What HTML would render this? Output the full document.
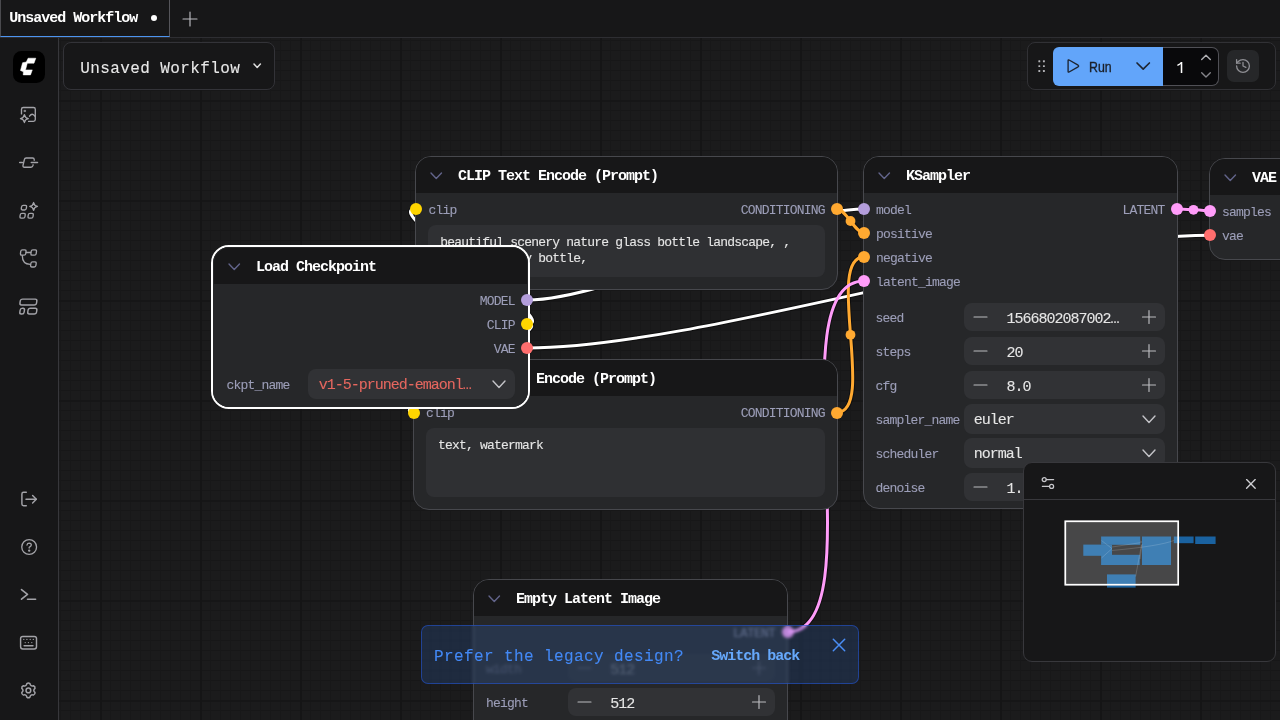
<!DOCTYPE html>
<html><head><meta charset="utf-8"><title>ComfyUI</title>
<style>
html,body{margin:0;padding:0}
body{width:1280px;height:720px;overflow:hidden;position:relative;background:#1c1c1d;font-family:"Liberation Mono",monospace}
.b{position:absolute;box-sizing:border-box;display:block}
.t{position:absolute;white-space:pre;line-height:20px;font-family:"Liberation Mono",monospace}
.s{font-family:"Liberation Sans",sans-serif}
#grid{position:absolute;left:0;top:0;width:1280px;height:720px;background-color:#1b1b1c;
background-image:linear-gradient(to right,#151516 2px,transparent 2px),linear-gradient(to bottom,#161617 2px,transparent 2px),linear-gradient(to right,#181819 1px,transparent 1px),linear-gradient(to bottom,#171718 1px,transparent 1px);
background-size:100px 100px,100px 100px,10px 10px,10px 10px}
.node{position:absolute;box-sizing:border-box;border:1px solid #47484d;border-radius:16px;background:#262729;overflow:hidden}
.node>.h{position:absolute;left:0;top:0;right:0;background:#171718}
.w{position:absolute;box-sizing:border-box;background:#313235;border-radius:8px}
</style></head><body>
<div id="grid"></div>

<div id="cv" style="position:absolute;left:0;top:0;width:1280px;height:720px;will-change:transform">
<svg class="b" style="left:0px;top:0px;" width="1280" height="720" viewBox="0 0 1280 720" fill="none"><path d="M527.0 300.0 C614.3 300.0 776.7 209.0 864.0 209.0" stroke="rgba(0,0,0,0.45)" stroke-width="5"/><path d="M527.0 324.0 C567.0 324.0 376.0 209.0 416.0 209.0" stroke="rgba(0,0,0,0.45)" stroke-width="5"/><path d="M527.0 324.0 C562.9 324.0 378.1 412.5 414.0 412.5" stroke="rgba(0,0,0,0.45)" stroke-width="5"/><path d="M527.0 348.0 C700.1 348.0 1036.9 235.2 1210.0 235.2" stroke="rgba(0,0,0,0.45)" stroke-width="5"/><path d="M837.0 209.0 C846.0 209.0 855.0 233.0 864.0 233.0" stroke="rgba(0,0,0,0.45)" stroke-width="5"/><path d="M837.0 412.5 C876.5 412.5 824.5 257.0 864.0 257.0" stroke="rgba(0,0,0,0.45)" stroke-width="5"/><path d="M787.5 632.0 C877.3 632.0 774.2 281.0 864.0 281.0" stroke="rgba(0,0,0,0.45)" stroke-width="5"/><path d="M1177.0 209.0 C1185.3 209.0 1201.7 210.7 1210.0 210.7" stroke="rgba(0,0,0,0.45)" stroke-width="5"/><path d="M527.0 300.0 C614.3 300.0 776.7 209.0 864.0 209.0" stroke="#fff" stroke-width="3"/><circle cx="695.5" cy="254.5" r="4.9" fill="#fff"/><path d="M527.0 324.0 C567.0 324.0 376.0 209.0 416.0 209.0" stroke="#fff" stroke-width="3"/><circle cx="471.5" cy="266.5" r="4.9" fill="#fff"/><path d="M527.0 324.0 C562.9 324.0 378.1 412.5 414.0 412.5" stroke="#fff" stroke-width="3"/><circle cx="470.5" cy="368.2" r="4.9" fill="#fff"/><path d="M527.0 348.0 C700.1 348.0 1036.9 235.2 1210.0 235.2" stroke="#fff" stroke-width="3"/><circle cx="868.5" cy="291.6" r="4.9" fill="#fff"/><path d="M837.0 209.0 C846.0 209.0 855.0 233.0 864.0 233.0" stroke="#ffa931" stroke-width="3"/><circle cx="850.5" cy="221.0" r="4.9" fill="#ffa931"/><path d="M837.0 412.5 C876.5 412.5 824.5 257.0 864.0 257.0" stroke="#ffa931" stroke-width="3"/><circle cx="850.5" cy="334.8" r="4.9" fill="#ffa931"/><path d="M787.5 632.0 C877.3 632.0 774.2 281.0 864.0 281.0" stroke="#ff9cf9" stroke-width="3"/><circle cx="825.8" cy="456.5" r="4.9" fill="#ff9cf9"/><path d="M1177.0 209.0 C1185.3 209.0 1201.7 210.7 1210.0 210.7" stroke="#ff9cf9" stroke-width="3"/><circle cx="1193.5" cy="209.8" r="4.9" fill="#ff9cf9"/></svg>
<div class="node" style="left:415px;top:156px;width:423px;height:134px;"><div class="h" style="height:36px"></div></div>
<svg class="b" style="left:428.75px;top:170.89999999999998px;" width="14.5" height="9.6" viewBox="0 0 14.5 9.6" fill="none"><path d="M2 2 L7.25 7.6 L12.5 2" stroke="#62648a" stroke-width="1.4" stroke-linecap="round" stroke-linejoin="round"/></svg>
<div class="t" style="left:458.00px;top:167.41px;font-size:15px;letter-spacing:-1.002px;color:#fff;font-weight:700;">CLIP Text Encode (Prompt)</div>
<div class="w" style="left:428px;top:225px;width:397px;height:52px;background:#2f3033"></div>
<div class="t" style="left:440.30px;top:232.94px;font-size:13px;letter-spacing:-0.801px;color:#e6e6e6;-webkit-text-stroke:0.1px;">beautiful scenery nature glass bottle landscape, ,</div>
<div class="t" style="left:440.30px;top:248.74px;font-size:13px;letter-spacing:-0.801px;color:#e6e6e6;-webkit-text-stroke:0.1px;">purple galaxy bottle,</div>
<div class="t" style="left:428.50px;top:200.89px;font-size:13px;letter-spacing:-0.801px;color:#9c9eb8;-webkit-text-stroke:0.1px;">clip</div>
<div class="t" style="left:740.80px;top:200.89px;font-size:13px;letter-spacing:-0.801px;color:#9c9eb8;-webkit-text-stroke:0.1px;">CONDITIONING</div>
<div class="b" style="left:410.0px;top:203.0px;width:12px;height:12px;border-radius:50%;background:#ffd500"></div>
<div class="b" style="left:831.0px;top:203.0px;width:12px;height:12px;border-radius:50%;background:#ffa931"></div>
<div class="node" style="left:413px;top:358.5px;width:424.5px;height:151px;"><div class="h" style="height:36px"></div></div>
<svg class="b" style="left:426.75px;top:373.4px;" width="14.5" height="9.6" viewBox="0 0 14.5 9.6" fill="none"><path d="M2 2 L7.25 7.6 L12.5 2" stroke="#62648a" stroke-width="1.4" stroke-linecap="round" stroke-linejoin="round"/></svg>
<div class="t" style="left:456.00px;top:369.91px;font-size:15px;letter-spacing:-1.002px;color:#fff;font-weight:700;">CLIP Text Encode (Prompt)</div>
<div class="w" style="left:426px;top:428px;width:399px;height:69px;background:#2f3033"></div>
<div class="t" style="left:438.10px;top:435.64px;font-size:13px;letter-spacing:-0.801px;color:#e6e6e6;-webkit-text-stroke:0.1px;">text, watermark</div>
<div class="t" style="left:425.90px;top:403.54px;font-size:13px;letter-spacing:-0.801px;color:#9c9eb8;-webkit-text-stroke:0.1px;">clip</div>
<div class="t" style="left:740.80px;top:403.54px;font-size:13px;letter-spacing:-0.801px;color:#9c9eb8;-webkit-text-stroke:0.1px;">CONDITIONING</div>
<div class="b" style="left:407.5px;top:406.5px;width:12px;height:12px;border-radius:50%;background:#ffd500"></div>
<div class="b" style="left:831.0px;top:406.5px;width:12px;height:12px;border-radius:50%;background:#ffa931"></div>
<div class="node" style="left:863px;top:156px;width:315px;height:353px;"><div class="h" style="height:36px"></div></div>
<svg class="b" style="left:876.75px;top:170.89999999999998px;" width="14.5" height="9.6" viewBox="0 0 14.5 9.6" fill="none"><path d="M2 2 L7.25 7.6 L12.5 2" stroke="#62648a" stroke-width="1.4" stroke-linecap="round" stroke-linejoin="round"/></svg>
<div class="t" style="left:906.00px;top:167.41px;font-size:15px;letter-spacing:-1.002px;color:#fff;font-weight:700;">KSampler</div>
<div class="t" style="left:875.90px;top:201.14px;font-size:13px;letter-spacing:-0.801px;color:#9c9eb8;-webkit-text-stroke:0.1px;">model</div>
<div class="b" style="left:858.0px;top:203.0px;width:12px;height:12px;border-radius:50%;background:#b39ddb"></div>
<div class="t" style="left:875.90px;top:225.14px;font-size:13px;letter-spacing:-0.801px;color:#9c9eb8;-webkit-text-stroke:0.1px;">positive</div>
<div class="b" style="left:858.0px;top:227.0px;width:12px;height:12px;border-radius:50%;background:#ffa931"></div>
<div class="t" style="left:875.90px;top:249.14px;font-size:13px;letter-spacing:-0.801px;color:#9c9eb8;-webkit-text-stroke:0.1px;">negative</div>
<div class="b" style="left:858.0px;top:251.0px;width:12px;height:12px;border-radius:50%;background:#ffa931"></div>
<div class="t" style="left:875.90px;top:273.14px;font-size:13px;letter-spacing:-0.801px;color:#9c9eb8;-webkit-text-stroke:0.1px;">latent_image</div>
<div class="b" style="left:858.0px;top:275.0px;width:12px;height:12px;border-radius:50%;background:#ff9cf9"></div>
<div class="t" style="left:1122.50px;top:201.14px;font-size:13px;letter-spacing:-0.801px;color:#9c9eb8;-webkit-text-stroke:0.1px;">LATENT</div>
<div class="b" style="left:1171.0px;top:203.0px;width:12px;height:12px;border-radius:50%;background:#ff9cf9"></div>
<div class="t" style="left:875.60px;top:309.04px;font-size:13px;letter-spacing:-0.801px;color:#9c9eb8;-webkit-text-stroke:0.1px;">seed</div>
<div class="w" style="left:964px;top:303px;width:201px;height:28px"></div>
<svg class="b" style="left:973px;top:313.0px;" width="15" height="8" viewBox="0 0 15 8" fill="none"><path d="M1 4H14" stroke="#bcbcc0" stroke-width="1.15" stroke-linecap="round"/></svg>
<svg class="b" style="left:1141px;top:309.0px;" width="16" height="16" viewBox="0 0 16 16" fill="none"><path d="M1.5 8H14.5M8 1.5V14.5" stroke="#bcbcc0" stroke-width="1.15" stroke-linecap="round"/></svg>
<div class="t" style="left:1006.60px;top:310.11px;font-size:15px;letter-spacing:-1.002px;color:#e6e6e6;-webkit-text-stroke:0.1px;">1566802087002…</div>
<div class="t" style="left:875.60px;top:343.04px;font-size:13px;letter-spacing:-0.801px;color:#9c9eb8;-webkit-text-stroke:0.1px;">steps</div>
<div class="w" style="left:964px;top:337px;width:201px;height:28px"></div>
<svg class="b" style="left:973px;top:347.0px;" width="15" height="8" viewBox="0 0 15 8" fill="none"><path d="M1 4H14" stroke="#bcbcc0" stroke-width="1.15" stroke-linecap="round"/></svg>
<svg class="b" style="left:1141px;top:343.0px;" width="16" height="16" viewBox="0 0 16 16" fill="none"><path d="M1.5 8H14.5M8 1.5V14.5" stroke="#bcbcc0" stroke-width="1.15" stroke-linecap="round"/></svg>
<div class="t" style="left:1006.60px;top:344.11px;font-size:15px;letter-spacing:-1.002px;color:#e6e6e6;-webkit-text-stroke:0.1px;">20</div>
<div class="t" style="left:875.60px;top:377.04px;font-size:13px;letter-spacing:-0.801px;color:#9c9eb8;-webkit-text-stroke:0.1px;">cfg</div>
<div class="w" style="left:964px;top:371px;width:201px;height:28px"></div>
<svg class="b" style="left:973px;top:381.0px;" width="15" height="8" viewBox="0 0 15 8" fill="none"><path d="M1 4H14" stroke="#bcbcc0" stroke-width="1.15" stroke-linecap="round"/></svg>
<svg class="b" style="left:1141px;top:377.0px;" width="16" height="16" viewBox="0 0 16 16" fill="none"><path d="M1.5 8H14.5M8 1.5V14.5" stroke="#bcbcc0" stroke-width="1.15" stroke-linecap="round"/></svg>
<div class="t" style="left:1006.60px;top:378.11px;font-size:15px;letter-spacing:-1.002px;color:#e6e6e6;-webkit-text-stroke:0.1px;">8.0</div>
<div class="t" style="left:875.60px;top:411.04px;font-size:13px;letter-spacing:-0.801px;color:#9c9eb8;-webkit-text-stroke:0.1px;">sampler_name</div>
<div class="w" style="left:964px;top:404px;width:201px;height:30px"></div>
<svg class="b" style="left:1141.0px;top:414.05px;" width="16" height="10.5" viewBox="0 0 16 10.5" fill="none"><path d="M2 2 L8.0 8.5 L14 2" stroke="#c4c4c8" stroke-width="1.4" stroke-linecap="round" stroke-linejoin="round"/></svg>
<div class="t" style="left:973.80px;top:411.21px;font-size:15px;letter-spacing:-1.002px;color:#e6e6e6;-webkit-text-stroke:0.1px;">euler</div>
<div class="t" style="left:875.60px;top:445.04px;font-size:13px;letter-spacing:-0.801px;color:#9c9eb8;-webkit-text-stroke:0.1px;">scheduler</div>
<div class="w" style="left:964px;top:438px;width:201px;height:30px"></div>
<svg class="b" style="left:1141.0px;top:448.05px;" width="16" height="10.5" viewBox="0 0 16 10.5" fill="none"><path d="M2 2 L8.0 8.5 L14 2" stroke="#c4c4c8" stroke-width="1.4" stroke-linecap="round" stroke-linejoin="round"/></svg>
<div class="t" style="left:973.80px;top:445.21px;font-size:15px;letter-spacing:-1.002px;color:#e6e6e6;-webkit-text-stroke:0.1px;">normal</div>
<div class="t" style="left:875.60px;top:479.04px;font-size:13px;letter-spacing:-0.801px;color:#9c9eb8;-webkit-text-stroke:0.1px;">denoise</div>
<div class="w" style="left:964px;top:473px;width:201px;height:28px"></div>
<svg class="b" style="left:973px;top:483.0px;" width="15" height="8" viewBox="0 0 15 8" fill="none"><path d="M1 4H14" stroke="#bcbcc0" stroke-width="1.15" stroke-linecap="round"/></svg>
<svg class="b" style="left:1141px;top:479.0px;" width="16" height="16" viewBox="0 0 16 16" fill="none"><path d="M1.5 8H14.5M8 1.5V14.5" stroke="#bcbcc0" stroke-width="1.15" stroke-linecap="round"/></svg>
<div class="t" style="left:1006.60px;top:480.11px;font-size:15px;letter-spacing:-1.002px;color:#e6e6e6;-webkit-text-stroke:0.1px;">1.00</div>
<div class="node" style="left:1209px;top:158px;width:200px;height:101.5px;"><div class="h" style="height:36px"></div></div>
<svg class="b" style="left:1222.75px;top:172.89999999999998px;" width="14.5" height="9.6" viewBox="0 0 14.5 9.6" fill="none"><path d="M2 2 L7.25 7.6 L12.5 2" stroke="#62648a" stroke-width="1.4" stroke-linecap="round" stroke-linejoin="round"/></svg>
<div class="t" style="left:1252.00px;top:169.41px;font-size:15px;letter-spacing:-1.002px;color:#fff;font-weight:700;">VAE Decode</div>
<div class="t" style="left:1221.90px;top:202.74px;font-size:13px;letter-spacing:-0.801px;color:#9c9eb8;-webkit-text-stroke:0.1px;">samples</div>
<div class="t" style="left:1221.90px;top:227.24px;font-size:13px;letter-spacing:-0.801px;color:#9c9eb8;-webkit-text-stroke:0.1px;">vae</div>
<div class="b" style="left:1204.0px;top:204.7px;width:12px;height:12px;border-radius:50%;background:#ff9cf9"></div>
<div class="b" style="left:1204.0px;top:229.2px;width:12px;height:12px;border-radius:50%;background:#ff6e6e"></div>
<div class="node" style="left:473px;top:579px;width:315px;height:200px;"><div class="h" style="height:36px"></div></div>
<svg class="b" style="left:486.75px;top:593.9000000000001px;" width="14.5" height="9.6" viewBox="0 0 14.5 9.6" fill="none"><path d="M2 2 L7.25 7.6 L12.5 2" stroke="#62648a" stroke-width="1.4" stroke-linecap="round" stroke-linejoin="round"/></svg>
<div class="t" style="left:516.00px;top:590.41px;font-size:15px;letter-spacing:-1.002px;color:#fff;font-weight:700;">Empty Latent Image</div>
<div style="opacity:.55">
<div class="t" style="left:733.00px;top:624.04px;font-size:13px;letter-spacing:-0.801px;color:#9c9eb8;-webkit-text-stroke:0.1px;">LATENT</div>
</div>
<div style="opacity:.27">
<div class="t" style="left:485.90px;top:660.24px;font-size:13px;letter-spacing:-0.801px;color:#9c9eb8;-webkit-text-stroke:0.1px;">width</div>
<div class="w" style="left:568.3px;top:654px;width:206.5px;height:28px"></div>
<svg class="b" style="left:577.3px;top:664.0px;" width="15" height="8" viewBox="0 0 15 8" fill="none"><path d="M1 4H14" stroke="#bcbcc0" stroke-width="1.15" stroke-linecap="round"/></svg>
<svg class="b" style="left:750.8px;top:660.0px;" width="16" height="16" viewBox="0 0 16 16" fill="none"><path d="M1.5 8H14.5M8 1.5V14.5" stroke="#bcbcc0" stroke-width="1.15" stroke-linecap="round"/></svg>
<div class="t" style="left:610.30px;top:661.11px;font-size:15px;letter-spacing:-1.002px;color:#e6e6e6;-webkit-text-stroke:0.1px;">512</div>
</div>
<div style="opacity:.8">
<div class="b" style="left:781.5px;top:626.0px;width:12px;height:12px;border-radius:50%;background:#ff9cf9"></div>
</div>
<div class="t" style="left:485.90px;top:694.24px;font-size:13px;letter-spacing:-0.801px;color:#9c9eb8;-webkit-text-stroke:0.1px;">height</div>
<div class="w" style="left:568.3px;top:688px;width:206.5px;height:28px"></div>
<svg class="b" style="left:577.3px;top:698.0px;" width="15" height="8" viewBox="0 0 15 8" fill="none"><path d="M1 4H14" stroke="#bcbcc0" stroke-width="1.15" stroke-linecap="round"/></svg>
<svg class="b" style="left:750.8px;top:694.0px;" width="16" height="16" viewBox="0 0 16 16" fill="none"><path d="M1.5 8H14.5M8 1.5V14.5" stroke="#bcbcc0" stroke-width="1.15" stroke-linecap="round"/></svg>
<div class="t" style="left:610.30px;top:695.11px;font-size:15px;letter-spacing:-1.002px;color:#e6e6e6;-webkit-text-stroke:0.1px;">512</div>
<div class="b" style="left:211px;top:245px;width:319px;height:164px;border:2px solid #fff;border-radius:18px;background:#262729"></div>
<div class="node" style="left:213px;top:247px;width:315px;height:160px;border-color:transparent;"><div class="h" style="height:36px"></div></div>
<svg class="b" style="left:226.75px;top:261.9px;" width="14.5" height="9.6" viewBox="0 0 14.5 9.6" fill="none"><path d="M2 2 L7.25 7.6 L12.5 2" stroke="#62648a" stroke-width="1.4" stroke-linecap="round" stroke-linejoin="round"/></svg>
<div class="t" style="left:256.00px;top:258.41px;font-size:15px;letter-spacing:-1.002px;color:#fff;font-weight:700;">Load Checkpoint</div>
<div class="t" style="left:479.70px;top:292.04px;font-size:13px;letter-spacing:-0.801px;color:#9c9eb8;-webkit-text-stroke:0.1px;">MODEL</div>
<div class="b" style="left:520.6px;top:294.0px;width:12px;height:12px;border-radius:50%;background:#b39ddb"></div>
<div class="t" style="left:486.70px;top:316.04px;font-size:13px;letter-spacing:-0.801px;color:#9c9eb8;-webkit-text-stroke:0.1px;">CLIP</div>
<div class="b" style="left:520.6px;top:318.0px;width:12px;height:12px;border-radius:50%;background:#ffd500"></div>
<div class="t" style="left:493.70px;top:340.04px;font-size:13px;letter-spacing:-0.801px;color:#9c9eb8;-webkit-text-stroke:0.1px;">VAE</div>
<div class="b" style="left:520.6px;top:342.0px;width:12px;height:12px;border-radius:50%;background:#ff6e6e"></div>
<div class="t" style="left:226.40px;top:375.94px;font-size:13px;letter-spacing:-0.801px;color:#9c9eb8;-webkit-text-stroke:0.1px;">ckpt_name</div>
<div class="w" style="left:308.2px;top:369px;width:206.5px;height:30px"></div>
<svg class="b" style="left:490.70000000000005px;top:379.05px;" width="16" height="10.5" viewBox="0 0 16 10.5" fill="none"><path d="M2 2 L8.0 8.5 L14 2" stroke="#c4c4c8" stroke-width="1.4" stroke-linecap="round" stroke-linejoin="round"/></svg>
<div class="t" style="left:318.70px;top:376.21px;font-size:15px;letter-spacing:-1.002px;color:#e5675f;-webkit-text-stroke:0.1px;">v1-5-pruned-emaonl…</div>
</div>
<div id="ch" style="position:absolute;left:0;top:0;width:1280px;height:720px;will-change:transform">
<div class="b" style="left:0px;top:37px;width:59px;height:683px;background:#171718;border-right:1px solid #37373b"></div>
<div class="b" style="left:0px;top:0px;width:1280px;height:38px;background:#171718;border-bottom:1px solid #2e2e32"></div>
<div class="b" style="left:0px;top:0px;width:170px;height:37px;border-left:1px solid #4a4a4e;border-right:1px solid #55555a;border-bottom:1px solid #4c94f0"></div>
<div class="b" style="left:150.8px;top:15.3px;width:6px;height:6px;border-radius:50%;background:#fff"></div>
<svg class="b" style="left:182px;top:10.5px;" width="16" height="16" viewBox="0 0 16 16" fill="none"><path d="M1 8H15M8 1V15" stroke="#bcbcc0" stroke-width="1.15" stroke-linecap="round"/></svg>
<div class="b" style="left:63px;top:42px;width:212px;height:48px;background:#171718;border:1px solid #333338;border-radius:8px"></div>
<div class="t" style="left:80.20px;top:59.14px;font-size:16px;letter-spacing:0.398px;color:#e8e8e8;-webkit-text-stroke:0.1px;">Unsaved Workflow</div>
<svg class="b" style="left:252.40000000000003px;top:62.099999999999994px;" width="10.4" height="7.4" viewBox="0 0 10.4 7.4" fill="none"><path d="M2 2 L5.2 5.4 L8.4 2" stroke="#e0e0e0" stroke-width="1.5" stroke-linecap="round" stroke-linejoin="round"/></svg>
<div class="b" style="left:1027px;top:42px;width:249px;height:48px;background:#171718;border:1px solid #313135;border-radius:8px"></div>
<svg class="b" style="left:1036px;top:58px;" width="12" height="16" viewBox="1036 58 12 16" fill="none"><rect x="1038.35" y="60.25" width="1.9" height="1.9" rx="0.5" fill="#b4b4b8"/><rect x="1038.35" y="65.14999999999999" width="1.9" height="1.9" rx="0.5" fill="#b4b4b8"/><rect x="1038.35" y="70.05" width="1.9" height="1.9" rx="0.5" fill="#b4b4b8"/><rect x="1042.95" y="60.25" width="1.9" height="1.9" rx="0.5" fill="#b4b4b8"/><rect x="1042.95" y="65.14999999999999" width="1.9" height="1.9" rx="0.5" fill="#b4b4b8"/><rect x="1042.95" y="70.05" width="1.9" height="1.9" rx="0.5" fill="#b4b4b8"/></svg>
<div class="b" style="left:1053px;top:47px;width:110px;height:39px;background:#62a5fa;border-radius:6px 0 0 6px"></div>
<svg class="b" style="left:1064px;top:58px;" width="18" height="16" viewBox="0 0 18 16" fill="none"><path d="M4.1 2.6 Q4.1 1.5 5.1 2 L14.1 7.2 Q15.2 8 14.1 8.8 L5.1 14 Q4.1 14.5 4.1 13.4 Z" stroke="#1d2430" stroke-width="1.35" stroke-linejoin="round"/></svg>
<div class="t s" style="left:1088.90px;top:56.85px;font-size:14px;letter-spacing:0px;color:#1b2029;font-weight:400;transform:scaleX(0.885);transform-origin:0 50%;-webkit-text-stroke:0.35px #1b2029">Run</div>
<svg class="b" style="left:1134.8px;top:60.99999999999999px;" width="16.4" height="10.2" viewBox="0 0 16.4 10.2" fill="none"><path d="M2 2 L8.2 8.2 L14.4 2" stroke="#1d2430" stroke-width="1.65" stroke-linecap="round" stroke-linejoin="round"/></svg>
<div class="b" style="left:1163px;top:47px;width:56px;height:39px;background:#09090b;border:1px solid #505056;border-left:none;border-radius:0 7px 7px 0"></div>
<svg class="b" style="left:1174px;top:58px;" width="12" height="18" viewBox="0 0 12 18" fill="none"><path d="M3.4 6.6 Q5.9 5.6 6.9 3.9 H8.3 V14.9 H6.75 V5.9 Q5.4 7.3 3.4 8 Z" fill="#fff"/></svg>
<svg class="b" style="left:1199px;top:52px;" width="14" height="10" viewBox="0 0 14 10" fill="none"><path d="M2.7 7.4 L7 3.2 L11.3 7.4" stroke="#b0b0b4" stroke-width="1.4" stroke-linecap="round" stroke-linejoin="round"/></svg>
<svg class="b" style="left:1199px;top:70px;" width="14" height="10" viewBox="0 0 14 10" fill="none"><path d="M2.7 2.7 L7 6.9 L11.3 2.7" stroke="#85858a" stroke-width="1.4" stroke-linecap="round" stroke-linejoin="round"/></svg>
<div class="b" style="left:1227px;top:50px;width:32px;height:32px;background:#262729;border-radius:7px"></div>
<svg class="b" style="left:1234.8px;top:58px;" width="16" height="16" viewBox="0 0 16 16" fill="none"><g stroke="#8f8f94" stroke-width="1.3" stroke-linecap="round" stroke-linejoin="round"><path d="M1.6 8a6.4 6.4 0 1 0 6.4-6.4 6.9 6.9 0 0 0-4.8 1.95L1.6 5.15"/><path d="M1.6 1.6v3.55h3.55"/><path d="M8 4.4V8l2.85 1.4"/></g></svg>
<div class="b" style="left:13px;top:51px;width:32px;height:32px;background:#000;border-radius:8.5px"></div>
<svg class="b" style="left:13px;top:51px;" width="32" height="32" viewBox="0 0 32 32" fill="none"><path d="M15.1 7.2 H22.8 L21 12.2 H14.3 L12.5 18.9 H19.3 L17.5 23.9 H10.2 L10.4 20.7 L7.5 19.5 L9.6 11.7 L13.3 11 Z" fill="#fff" stroke="#fff" stroke-width="0.5" stroke-linejoin="round"/></svg>
<svg class="b" style="left:0px;top:38px;" width="59" height="682" viewBox="0 38 59 682" fill="none"><g stroke="#a3a3a8" stroke-width="1.35" stroke-linecap="round" stroke-linejoin="round" ><path d="M21.5 113.9 V109.3 Q21.5 107.5 23.3 107.5 H33.5 Q35.3 107.5 35.3 109.3 V119.6 Q35.3 121.4 33.5 121.4 H28.6"/><path d="M29.5 116.2 Q32.2 112.2 35.1 116.4"/><rect x="24.3" y="110.3" width="1.3" height="1.3" fill="#a3a3a8" stroke-width="0.6"/><path d="M24.4 114.7 Q25 118 28.3 118.6 Q25 119.2 24.4 122.5 Q23.8 119.2 20.5 118.6 Q23.8 118 24.4 114.7 Z"/></g></svg>
<svg class="b" style="left:0px;top:38px;" width="59" height="682" viewBox="0 38 59 682" fill="none"><g stroke="#a3a3a8" stroke-width="1.35" stroke-linecap="round" stroke-linejoin="round" ><path d="M19.7 162.4 H22.4 M31.3 162.4 H37.5" stroke-width="1.5"/><path d="M34.2 160.3 V159.6 Q34.2 158 32.6 158 H26.2 Q24.7 158 24.4 159.5 L23 165.4 Q22.7 167.2 24.4 167.2 H31 Q32.5 167.2 32.9 165.7 L33.1 164.8"/></g></svg>
<svg class="b" style="left:0px;top:38px;" width="59" height="682" viewBox="0 38 59 682" fill="none"><g stroke="#a3a3a8" stroke-width="1.35" stroke-linecap="round" stroke-linejoin="round" ><rect x="21.45" y="205.30" width="5.0" height="4.7" rx="1.4" transform="translate(23.95 207.65) skewX(-9) translate(-23.95 -207.65)"/><rect x="20.10" y="213.40" width="5.0" height="4.7" rx="1.4" transform="translate(22.6 215.75) skewX(-9) translate(-22.6 -215.75)"/><rect x="28.15" y="213.40" width="5.0" height="4.7" rx="1.4" transform="translate(30.65 215.75) skewX(-9) translate(-30.65 -215.75)"/><path d="M33.6 202.55 Q34.216 205.784 37.45 206.4 Q34.216 207.01600000000002 33.6 210.25 Q32.984 207.01600000000002 29.75 206.4 Q32.984 205.784 33.6 202.55 Z"/></g></svg>
<svg class="b" style="left:0px;top:38px;" width="59" height="682" viewBox="0 38 59 682" fill="none"><g stroke="#a3a3a8" stroke-width="1.35" stroke-linecap="round" stroke-linejoin="round" ><rect x="20.60" y="249.90" width="5.3" height="5.2" rx="1.4" transform="translate(23.25 252.5) skewX(-8) translate(-23.25 -252.5)"/><rect x="31.05" y="249.90" width="5.3" height="5.2" rx="1.4" transform="translate(33.7 252.5) skewX(-8) translate(-33.7 -252.5)"/><rect x="30.75" y="261.80" width="5.3" height="5.2" rx="1.4" transform="translate(33.4 264.4) skewX(-8) translate(-33.4 -264.4)"/><path d="M26.3 252.5 H30.6"/><path d="M22.3 255.6 Q22.3 264.4 30.2 264.4"/></g></svg>
<svg class="b" style="left:0px;top:38px;" width="59" height="682" viewBox="0 38 59 682" fill="none"><g stroke="#a3a3a8" stroke-width="1.45" stroke-linecap="round" stroke-linejoin="round" ><rect x="20.10" y="299.10" width="16.6" height="5.8" rx="2" transform="translate(28.4 302) skewX(-9) translate(-28.4 -302)"/><rect x="20.00" y="308.30" width="4.3" height="5.8" rx="1.8" transform="translate(22.15 311.2) skewX(-9) translate(-22.15 -311.2)"/><rect x="27.90" y="308.30" width="8.8" height="5.8" rx="2" transform="translate(32.3 311.2) skewX(-9) translate(-32.3 -311.2)"/></g></svg>
<svg class="b" style="left:0px;top:38px;" width="59" height="682" viewBox="0 38 59 682" fill="none"><g stroke="#a3a3a8" stroke-width="1.45" stroke-linecap="round" stroke-linejoin="round" ><path d="M26.3 492.2 H23.6 Q21.9 492.2 21.9 493.9 V504.1 Q21.9 505.8 23.6 505.8 H26.3"/><path d="M26 499.3 H36.3"/><path d="M32.6 495.6 L36.3 499.3 L32.6 503"/></g></svg>
<svg class="b" style="left:0px;top:38px;" width="59" height="682" viewBox="0 38 59 682" fill="none"><g stroke="#a3a3a8" stroke-width="1.3" stroke-linecap="round" stroke-linejoin="round" ><circle cx="29.15" cy="547" r="7.4"/><path d="M27 545 Q27.3 543.2 29.2 543.2 Q31.3 543.3 31.3 545 Q31.3 546.3 29.2 547.3 V548"/><circle cx="29.2" cy="550.6" r="0.55" fill="#a3a3a8"/></g></svg>
<svg class="b" style="left:0px;top:38px;" width="59" height="682" viewBox="0 38 59 682" fill="none"><g stroke="#a3a3a8" stroke-width="1.6" stroke-linecap="round" stroke-linejoin="round" ><path d="M21.5 589.6 L27.5 594.4 L21.5 599.2"/><path d="M27.5 599.3 H35.6"/></g></svg>
<svg class="b" style="left:0px;top:38px;" width="59" height="682" viewBox="0 38 59 682" fill="none"><g stroke="#a3a3a8" stroke-width="1.45" stroke-linecap="round" stroke-linejoin="round" ><rect x="20.6" y="636.4" width="15.9" height="12.6" rx="2.2"/><path d="M24.1 645.7 H33" stroke-width="1.4"/><g stroke-width="1.25"><path d="M23.8 639.4h.01M26.9 639.4h.01M30.2 639.4h.01M33.3 639.4h.01M25.2 642.6h.01M28.4 642.6h.01M31.8 642.6h.01"/></g></g></svg>
<svg class="b" style="left:0px;top:38px;" width="59" height="682" viewBox="0 38 59 682" fill="none"><g stroke="#a3a3a8" stroke-width="1.5" stroke-linecap="round" stroke-linejoin="round" ><path d="M26.85 683.68 Q28.40 682.40 29.95 683.68 Q30.50 686.76 33.45 685.69 Q35.33 686.40 35.00 688.38 Q32.60 690.40 35.00 692.42 Q35.33 694.40 33.45 695.11 Q30.50 694.04 29.95 697.12 Q28.40 698.40 26.85 697.12 Q26.30 694.04 23.35 695.11 Q21.47 694.40 21.80 692.42 Q24.20 690.40 21.80 688.38 Q21.47 686.40 23.35 685.69 Q26.30 686.76 26.85 683.68 Z"/><circle cx="28.4" cy="690.4" r="2.35"/></g></svg>
<div class="b" style="left:1023px;top:462px;width:253px;height:199.5px;background:#171718;border:1px solid #38383c;border-radius:9px"></div>
<div class="b" style="left:1024px;top:499px;width:251px;height:1px;background:#38383c"></div>
<svg class="b" style="left:1040px;top:475px;" width="16" height="16" viewBox="0 0 16 16" fill="none"><g stroke="#c8c8cc" stroke-width="1.25" stroke-linecap="round"><circle cx="4.2" cy="4.6" r="2"/><path d="M6.4 4.6H13.6"/><circle cx="11.6" cy="11.4" r="2"/><path d="M2.4 11.4H9.4"/></g></svg>
<svg class="b" style="left:1244px;top:477px;" width="14" height="14" viewBox="0 0 14 14" fill="none"><path d="M2.6 2.6 L11.2 11.2 M11.2 2.6 L2.6 11.2" stroke="#d0d0d4" stroke-width="1.35" stroke-linecap="round"/></svg>
<svg class="b" style="left:1023px;top:462px;" width="253" height="200" viewBox="1023 462 253 200" fill="none"><rect x="1064.5" y="520.5" width="114.5" height="65" fill="#474748"/><rect x="1101.1" y="536.5" width="39.1" height="8.3" fill="#3f7fb4"/><rect x="1101.1" y="554.8" width="38.7" height="10.2" fill="#3f7fb4"/><rect x="1142" y="536.5" width="29.0" height="28.5" fill="#3f7fb4"/><rect x="1083.3" y="544.6" width="28.7" height="11.2" fill="#3f7fb4"/><rect x="1107" y="574.4" width="28.6" height="11.1" fill="#3f7fb4"/><rect x="1107" y="585.5" width="28.6" height="2.1" fill="#1a62a0"/><rect x="1173.8" y="536.5" width="5.2" height="6.7" fill="#3f7fb4"/><rect x="1179" y="536.5" width="14.6" height="6.7" fill="#1a62a0"/><rect x="1195.2" y="536.5" width="20.4" height="7.5" fill="#1a62a0"/><g stroke="rgba(255,255,255,0.2)" stroke-width="0.8" fill="none"><path d="M1112 547 L1141.5 542.5"/><path d="M1112 550.5 Q1160 546 1173.8 540.5"/><path d="M1112 548.6 L1101.5 540.5 M1112 548.6 L1101.5 558"/><path d="M1135.6 576.5 L1141.5 545"/><path d="M1140 541 L1142 542 M1140 559 L1142 544"/></g><rect x="1065.3" y="521.3" width="112.9" height="63.4" fill="none" stroke="#fff" stroke-width="1.7"/></svg>
<div class="b" style="left:421px;top:625px;width:438px;height:59px;background:rgba(59,130,246,0.16);border:1px solid rgba(35,88,220,0.55);border-radius:7px;-webkit-backdrop-filter:blur(1.5px);backdrop-filter:blur(1.5px)"></div>
<div class="t" style="left:434.00px;top:646.94px;font-size:16px;letter-spacing:0.398px;color:#4389f6;-webkit-text-stroke:0.1px;">Prefer the legacy design?</div>
<div class="t" style="left:711.30px;top:646.71px;font-size:15px;letter-spacing:-1.002px;color:#66a8fb;font-weight:700;">Switch back</div>
<svg class="b" style="left:831px;top:637px;" width="16" height="16" viewBox="0 0 16 16" fill="none"><path d="M2.3 2.3 L13.7 13.7 M13.7 2.3 L2.3 13.7" stroke="#4a8ef6" stroke-width="1.5" stroke-linecap="round"/></svg>
</div>
<div class="t" style="left:9.20px;top:9.31px;font-size:15px;letter-spacing:-1.002px;color:#fff;font-weight:700;">Unsaved Workflow</div>
</body></html>
